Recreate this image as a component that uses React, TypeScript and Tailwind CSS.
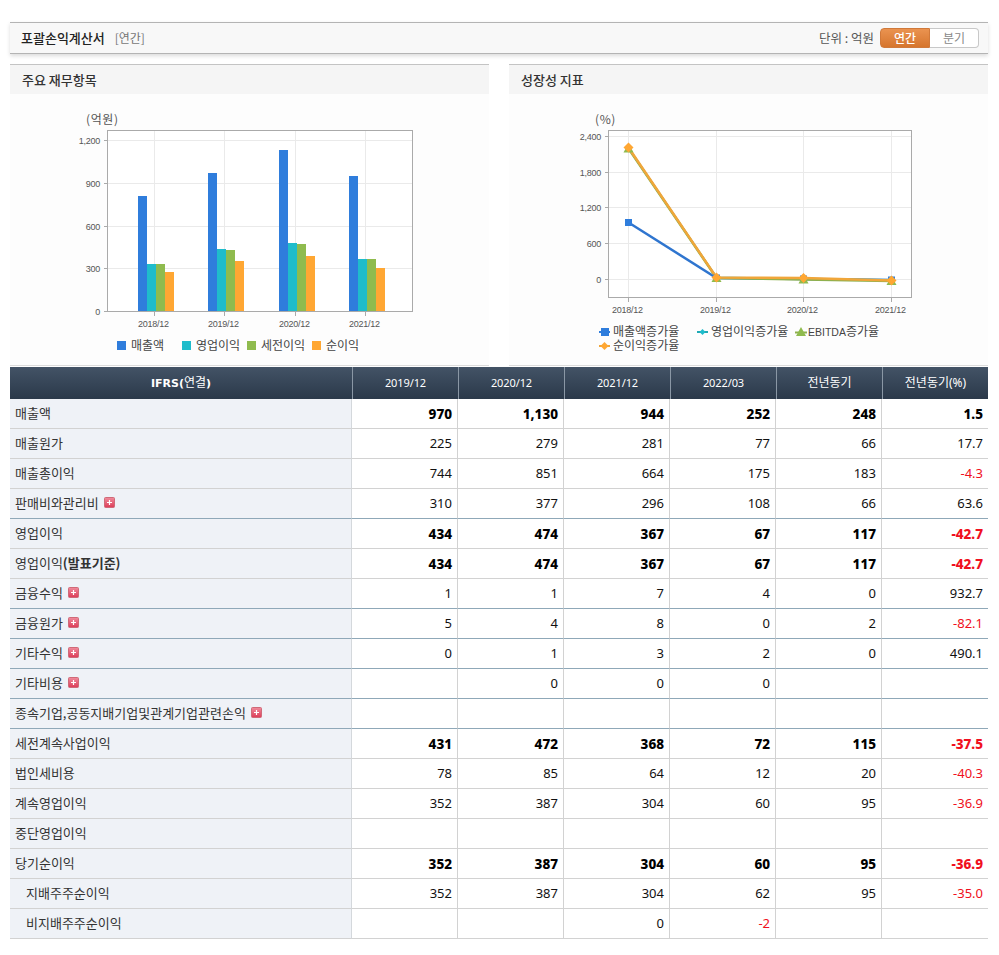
import React from "react";

const KR = '"Noto Sans CJK KR","Noto Sans",sans-serif';
const TICK = '"Liberation Sans",Arial,sans-serif';

type Row = { label: string; suffix?: string; vals: string[]; bold?: boolean; plus?: boolean; blue?: boolean; indent?: boolean };

const rows: Row[] = [
  { label: "매출액", vals: ["970", "1,130", "944", "252", "248", "1.5"], bold: true },
  { label: "매출원가", vals: ["225", "279", "281", "77", "66", "17.7"] },
  { label: "매출총이익", vals: ["744", "851", "664", "175", "183", "-4.3"] },
  { label: "판매비와관리비", vals: ["310", "377", "296", "108", "66", "63.6"], plus: true, blue: true },
  { label: "영업이익", vals: ["434", "474", "367", "67", "117", "-42.7"], bold: true },
  { label: "영업이익", suffix: "(발표기준)", vals: ["434", "474", "367", "67", "117", "-42.7"], bold: true },
  { label: "금융수익", vals: ["1", "1", "7", "4", "0", "932.7"], plus: true, blue: true },
  { label: "금융원가", vals: ["5", "4", "8", "0", "2", "-82.1"], plus: true, blue: true },
  { label: "기타수익", vals: ["0", "1", "3", "2", "0", "490.1"], plus: true, blue: true },
  { label: "기타비용", vals: ["", "0", "0", "0", "", ""], plus: true, blue: true },
  { label: "종속기업,공동지배기업및관계기업관련손익", vals: ["", "", "", "", "", ""], plus: true, blue: true },
  { label: "세전계속사업이익", vals: ["431", "472", "368", "72", "115", "-37.5"], bold: true },
  { label: "법인세비용", vals: ["78", "85", "64", "12", "20", "-40.3"] },
  { label: "계속영업이익", vals: ["352", "387", "304", "60", "95", "-36.9"] },
  { label: "중단영업이익", vals: ["", "", "", "", "", ""] },
  { label: "당기순이익", vals: ["352", "387", "304", "60", "95", "-36.9"], bold: true },
  { label: "지배주주순이익", vals: ["352", "387", "304", "62", "95", "-35.0"], indent: true },
  { label: "비지배주주순이익", vals: ["", "", "0", "-2", "", ""], indent: true },
];

const heads = ["2019/12", "2020/12", "2021/12", "2022/03", "전년동기", "전년동기(%)"];

function Plus() {
  return (
    <svg width="11" height="11" viewBox="0 0 11 11" className="inline-block ml-[5px] align-[0px]">
      <defs>
        <linearGradient id="pl" x1="0" y1="0" x2="0" y2="1">
          <stop offset="0" stopColor="#f08c9c" />
          <stop offset="1" stopColor="#dc3c58" />
        </linearGradient>
      </defs>
      <rect x="0.5" y="0.5" width="10" height="10" rx="1" fill="url(#pl)" stroke="#cf6a78" />
      <path d="M3 5.5h5M5.5 3v5" stroke="#fff" strokeWidth="1.2" />
    </svg>
  );
}

function Grid({ x0, x1, y0, y1, ys, xs }: { x0: number; x1: number; y0: number; y1: number; ys: number[]; xs: number[] }) {
  return (
    <g shapeRendering="crispEdges">
      <rect x={x0} y={y0} width={x1 - x0} height={y1 - y0} fill="#fff" />
      {ys.map((y) => (
        <line key={y} x1={x0} x2={x1} y1={y} y2={y} stroke="#eaeaea" />
      ))}
      {xs.map((x) => (
        <line key={x} x1={x} x2={x} y1={y0} y2={y1} stroke="#eaeaea" />
      ))}
      {ys.map((y) => (
        <line key={"t" + y} x1={x0 - 4} x2={x0} y1={y} y2={y} stroke="#aaa" />
      ))}
      {xs.map((x) => (
        <line key={"b" + x} x1={x} x2={x} y1={y1} y2={y1 + 4} stroke="#aaa" />
      ))}
      <rect x={x0} y={y0} width={x1 - x0} height={y1 - y0} fill="none" stroke="#aaa" />
    </g>
  );
}

const tickProps = { fontSize: 9, letterSpacing: -0.25, fill: "#555", fontFamily: TICK };

function LeftChart() {
  const colors = ["#2f7ddc", "#1fbccb", "#8fbb4e", "#ffa733"];
  const groups = [
    { x: 138, tops: [196, 264, 264, 272] },
    { x: 208, tops: [173, 249, 250, 261] },
    { x: 279, tops: [150, 243, 244, 256] },
    { x: 349, tops: [176, 259, 259, 268] },
  ];
  const ys = [140.5, 183.5, 226.5, 268.5, 311.5];
  const yl = ["1,200", "900", "600", "300", "0"];
  const xs = [154.5, 224.5, 295.5, 365.5];
  const xl = ["2018/12", "2019/12", "2020/12", "2021/12"];
  const leg = [
    [117, "매출액"],
    [182, "영업이익"],
    [247, "세전이익"],
    [312, "순이익"],
  ] as const;
  return (
    <svg viewBox="10 94 479 271" className="block w-[479px] h-[271px]">
      <text x="86" y="124" fontSize="12" letterSpacing="0.6" fill="#555" fontFamily={KR}>(억원)</text>
      <Grid x0={107.5} x1={412.5} y0={130.5} y1={311.5} ys={ys} xs={xs} />
      {groups.map((g) =>
        g.tops.map((t, i) => <rect key={g.x + "-" + i} x={g.x + i * 9} y={t} width={9} height={311 - t} fill={colors[i]} />)
      )}
      <rect x="107" y="311" width="306" height="1" fill="#aaa" />
      {ys.map((y, i) => (
        <text key={y} x="100" y={y + 3.5} textAnchor="end" {...tickProps}>{yl[i]}</text>
      ))}
      {xs.map((x, i) => (
        <text key={x} x={x - 1} y="327" textAnchor="middle" {...tickProps}>{xl[i]}</text>
      ))}
      {leg.map(([x, t], i) => (
        <g key={t}>
          <rect x={x} y="341" width="9" height="9" fill={colors[i]} />
          <text x={x + 14} y="349.5" fontSize="12" fill="#444" fontFamily={KR}>{t}</text>
        </g>
      ))}
    </svg>
  );
}

function Tri({ x, y, c }: { x: number; y: number; c: string }) {
  return <path d={`M${x} ${y - 5}L${x + 5} ${y + 4}H${x - 5}Z`} fill={c} />;
}
function Dia({ x, y, c, r = 5 }: { x: number; y: number; c: string; r?: number }) {
  return <path d={`M${x} ${y - r}L${x + r} ${y}L${x} ${y + r}L${x - r} ${y}Z`} fill={c} />;
}

function RightChart() {
  const ys = [136.5, 172.5, 207.5, 243.5, 279.5];
  const yl = ["2,400", "1,800", "1,200", "600", "0"];
  const xs = [628.5, 716.5, 803.5, 891.5];
  const xl = ["2018/12", "2019/12", "2020/12", "2021/12"];
  const blue = [[628.5, 222.5], [716.5, 278], [803.5, 279], [891.5, 280]];
  const teal = [[628.5, 148], [716.5, 277.5], [803.5, 279], [891.5, 280]];
  const green = [[628.5, 148.5], [716.5, 278], [803.5, 279.5], [891.5, 281]];
  const orange = [[628.5, 147.5], [716.5, 277.5], [803.5, 278], [891.5, 280.5]];
  const pts = (p: number[][]) => p.map((q) => q.join(",")).join(" ");
  return (
    <svg viewBox="509 94 479 271" className="block w-[479px] h-[271px]">
      <text x="595" y="124" fontSize="12" letterSpacing="0.6" fill="#555" fontFamily={KR}>(%)</text>
      <Grid x0={608.5} x1={911.5} y0={130.5} y1={297.5} ys={ys} xs={xs} />
      <polyline points={pts(blue)} fill="none" stroke="#2f75cf" strokeWidth="2.5" />
      <polyline points={pts(teal)} fill="none" stroke="#1fa9b5" strokeWidth="2" />
      <polyline points={pts(green)} fill="none" stroke="#8fb04e" strokeWidth="2.5" />
      <polyline points={pts(orange)} fill="none" stroke="#f0a63a" strokeWidth="2.5" />
      <rect x="625" y="219" width="7" height="7" fill="#2f7ddc" />
      {blue.slice(1).map((p) => <rect key={"b" + p[0]} x={p[0] - 3.5} y={p[1] - 3.5} width="7" height="7" fill="#2f7ddc" />)}
      {teal.slice(1).map((p) => <Dia key={"t" + p[0]} x={p[0]} y={p[1]} c="#1fbccb" r={4} />)}
      {green.map((p) => <Tri key={"g" + p[0]} x={p[0]} y={p[1]} c="#8fbb4e" />)}
      {orange.map((p) => <Dia key={"o" + p[0]} x={p[0]} y={p[1]} c="#ffa733" />)}
      {ys.map((y, i) => (
        <text key={y} x="601" y={y + 3.5} textAnchor="end" {...tickProps}>{yl[i]}</text>
      ))}
      {xs.map((x, i) => (
        <text key={x} x={x - 1} y="313" textAnchor="middle" {...tickProps}>{xl[i]}</text>
      ))}
      <g>
        <path d="M599 332h11" stroke="#2f7ddc" strokeWidth="2" />
        <rect x="601" y="328" width="8" height="8" fill="#2f7ddc" />
        <text x="613" y="335.5" fontSize="12" fill="#444" fontFamily={KR}>매출액증가율</text>
        <path d="M697 332h11" stroke="#1fa9b5" strokeWidth="2" />
        <Dia x={702.5} y={332} c="#1fbccb" r={3} />
        <text x="711" y="335.5" fontSize="12" fill="#444" fontFamily={KR}>영업이익증가율</text>
        <path d="M795 332.5h12" stroke="#8fb04e" strokeWidth="2" />
        <Tri x={801} y={332} c="#8fbb4e" />
        <text x="808" y="335.5" fontSize="12" fill="#444" fontFamily={KR}>
          <tspan fontSize="10.5" fontFamily={TICK}>EBITDA</tspan>증가율
        </text>
        <path d="M599 346h11" stroke="#f0a63a" strokeWidth="2" />
        <Dia x={604.5} y={346} c="#ffa733" r={4} />
        <text x="613" y="349.5" fontSize="12" fill="#444" fontFamily={KR}>순이익증가율</text>
      </g>
    </svg>
  );
}

function Panel({ title, children }: { title: string; children: React.ReactNode }) {
  return (
    <div className="w-[479px] border-b border-[#dcdcdc] bg-[#fdfdfd]">
      <div className="h-[30px] border-t border-[#c4c4c4] bg-[#f5f5f5] pl-3 pt-[1px] flex items-center text-[13px] font-medium text-[#333]">
        {title}
      </div>
      {children}
    </div>
  );
}

export default function App() {
  return (
    <div className="bg-white w-[999px] h-[955px] pl-[10px] pr-[11px] pt-[22px] overflow-hidden" style={{ fontFamily: KR }}>
      <div className="h-[32px] border-t border-b border-[#b4b4b4] bg-[#f8f8f8] shadow-[0_2px_4px_rgba(0,0,0,0.14)] flex items-center justify-between pl-[11px] pr-[9px]">
        <div className="flex items-center">
          <span className="text-[13px] font-medium text-[#222]">포괄손익계산서</span>
          <span className="text-[12px] text-[#777] ml-[10px]">[연간]</span>
        </div>
        <div className="flex items-center">
          <span className="text-[12.5px] text-[#555] mr-[6px]">단위 : 억원</span>
          <div className="flex w-[99px] h-[20px] text-[12px]">
            <div className="w-[50px] rounded-l-[4px] bg-gradient-to-b from-[#ea9350] to-[#d6752c] border border-[#d0793a] text-white flex items-center justify-center font-medium">연간</div>
            <div className="w-[49px] rounded-r-[4px] bg-white border border-l-0 border-[#c8c8c8] text-[#888] flex items-center justify-center">분기</div>
          </div>
        </div>
      </div>
      <div className="flex justify-between mt-[10px] mb-[1px]">
        <Panel title="주요 재무항목"><LeftChart /></Panel>
        <Panel title="성장성 지표"><RightChart /></Panel>
      </div>
      <table className="table-fixed border-separate border-spacing-0 w-[978px]">
        <colgroup>
          <col className="w-[342px]" />
          {heads.map((h) => <col key={h} className="w-[106px]" />)}
        </colgroup>
        <thead>
          <tr className="h-[32px] bg-gradient-to-b from-[#435366] to-[#2b394a] text-white">
            <th className="text-[12px] font-bold p-0">
              <span style={{ fontFamily: '"DejaVu Sans",sans-serif' }} className="text-[11px] font-bold">IFRS(</span>
              <span className="font-normal">연결</span>
              <span style={{ fontFamily: '"DejaVu Sans",sans-serif' }} className="text-[11px] font-bold">)</span>
            </th>
            {heads.map((h, i) => (
              <th
                key={h}
                className={"border-l border-[#8a97a5] " + (i < 4 ? "text-[11px] tracking-[-0.1px] " : "text-[12px] ") + "font-normal p-0"}
                style={{ fontFamily: '"Noto Sans","Noto Sans CJK KR",sans-serif' }}
              >
                {h}
              </th>
            ))}
          </tr>
        </thead>
        <tbody>
          {rows.map((r, idx) => {
            const b = r.blue ? "border-b-[#8fa8b8]" : "border-b-[#d2d2d2]";
            return (
              <tr key={idx} className="h-[30px]">
                <td className={`bg-[#eff2f7] border-b border-r border-r-[#d4d8dc] ${b} text-[13px] text-[#333] p-0 pb-[1px] whitespace-nowrap ${r.indent ? "pl-[16px]" : "pl-[5px]"}`}>
                  {r.label}
                  {r.suffix && <span className="font-bold">{r.suffix}</span>}
                  {r.plus && <Plus />}
                </td>
                {r.vals.map((v, i) => (
                  <td
                    key={i}
                    className={`border-b ${b} ${i < 5 ? "border-r border-r-[#d2d2d2]" : ""} text-right p-0 pt-[1px] pr-[5px] ${r.bold ? "text-[13.5px] font-extrabold" : "text-[13px]"} ${v.startsWith("-") ? "text-[#f01020]" : r.bold ? "text-black" : "text-[#111]"}`}
                    style={{ fontFamily: '"Noto Sans",sans-serif' }}
                  >
                    {v}
                  </td>
                ))}
              </tr>
            );
          })}
        </tbody>
      </table>
    </div>
  );
}
